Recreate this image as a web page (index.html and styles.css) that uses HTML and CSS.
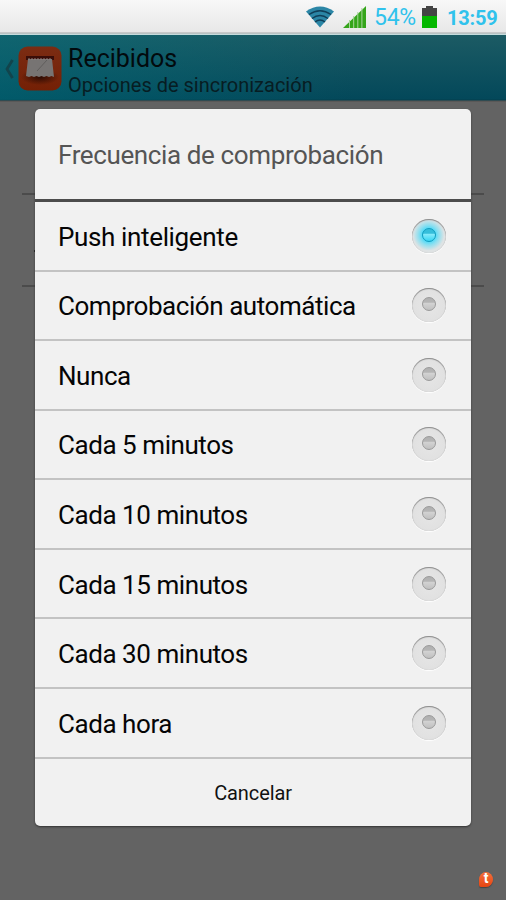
FILE: index.html
```html
<!DOCTYPE html>
<html lang="es">
<head>
<meta charset="utf-8">
<title>Recibidos</title>
<link rel="stylesheet" href="styles.css">
</head>
<body>
<div class="screen">
  <header class="status">
    <svg class="wifi" width="28" height="22" viewBox="0 0 28 22">
      <path d="M0 5.5Q14-4.500 28 5.500L14 21.500Z" fill="#2b86a6"/>
      <path d="M3 8.500Q14 1 25 8.500M6 12.500Q14 6.500 22 12.500M9 16Q14 12 19 16" fill="none" stroke="#103f59" stroke-width="1.500"/>
    </svg>
    <svg class="signal" width="23" height="22" viewBox="0 0 23 22">
      <path d="M0 22L23 0V22Z" fill="#35a51b"/>
      <path d="M6.500 14V22M10.700 10V22M14.800 6V22M18.900 2V22" stroke="#a9d59c" stroke-width="1"/>
    </svg>
    <span class="percent">54%</span>
    <svg class="battery" width="15" height="22" viewBox="0 0 15 22">
      <path d="M0 2H4V0H11V2H15V10H0Z" fill="#444"/>
      <path d="M0 10H15V22H0Z" fill="#05b800"/>
    </svg>
    <span class="clock">13:59</span>
  </header>
  <div class="appbar">
    <svg class="back" width="10" height="20" viewBox="0 0 10 20"><path d="M8.500 1L3 10L8.500 19" fill="none" stroke="#12444c" stroke-width="2.800"/></svg>
    <svg class="logo" width="44" height="45" viewBox="0 0 44 45">
      <defs>
        <linearGradient id="tile" x2="0" y2="1"><stop offset="0" stop-color="#7b2c13"/><stop offset="1" stop-color="#742005"/></linearGradient>
        <radialGradient id="shade"><stop offset="0" stop-color="#2d0c04"/><stop offset="1" stop-color="#2d0c04" stop-opacity="0"/></radialGradient>
      </defs>
      <rect x=".5" y=".5" width="43" height="44" rx="9" fill="url(#tile)"/>
      <ellipse cx="22" cy="31" rx="19" ry="8" fill="url(#shade)"/>
      <path d="M8 10H36V14H8Z" fill="#3a0d08"/>
      <path d="M10 13H34L36 31L33.500 30L31 31L28.500 30L26 31L23.500 30L21 31L18.500 30L16 31L13.500 30L11 31L8 30Z" fill="#777473"/>
      <path d="M10 13H34" stroke="#918280" stroke-width="1" stroke-dasharray="2 1"/>
      <path d="M19 25L29 14" stroke="#605e5d" stroke-width="1"/>
    </svg>
    <div class="titles">
      <h1>Recibidos</h1>
      <p>Opciones de sincronización</p>
    </div>
  </div>
  <main class="settings"><div class="setting"></div><div class="setting"><i class="mark"></i></div></main>

  <section class="dialog">
    <h2><span>Frecuencia de comprobación</span></h2>
    <ul>
      <li><span class="push">Push inteligente</span><i class="radio on"></i></li>
      <li><span>Comprobación automática</span><i class="radio"></i></li>
      <li><span>Nunca</span><i class="radio"></i></li>
      <li><span>Cada 5 minutos</span><i class="radio"></i></li>
      <li><span>Cada 10 minutos</span><i class="radio"></i></li>
      <li><span>Cada 15 minutos</span><i class="radio"></i></li>
      <li><span>Cada 30 minutos</span><i class="radio"></i></li>
      <li><span>Cada hora</span><i class="radio"></i></li>
    </ul>
    <button>Cancelar</button>
  </section>
  <div class="badge"><span>t</span></div>
</div>
</body>
</html>
```
FILE: styles.css
```css
* { box-sizing: border-box; }
body { margin: 0; font-family: Roboto, sans-serif; }
h1, h2, p, ul { margin: 0; padding: 0; font-weight: 400; }
.screen { position: relative; width: 506px; height: 900px; overflow: hidden; background: #636363; display: flex; flex-direction: column; }
.status { height: 35px; flex: none; background: linear-gradient(#f8f8f8, #e8e8e8 32px, #aaa 33px, #c6dcdd 34px); display: flex; align-items: flex-start; padding: 6px 0 0 306px; color: #30c2ec; line-height: 24px; white-space: nowrap; }
.signal { margin-left: 9px; }
.percent { font-size: 23px; letter-spacing: -0.3px; width: 42px; margin-left: 8px; }
.battery { margin-left: 6px; }
.clock { font-size: 20px; font-weight: 700; letter-spacing: -0.2px; margin-left: 10px; }
.appbar { height: 67px; flex: none; background: linear-gradient(90deg, rgba(0, 112, 125, .45), rgba(0, 112, 125, 0) 70%) 0 0 / 100% 65px no-repeat, linear-gradient(#1c5b64, #03485a 64px, #043e4c 65px, #5a5857 66px); display: flex; padding-left: 4px; }
.back { margin-top: 24px; }
.logo { margin: 11px 0 0 4px; }
.titles { margin: 10px 0 0 6px; color: #071d23; white-space: nowrap; }
h1 { font-size: 25px; line-height: 28px; color: #020a0d; }
.titles p { font-size: 20px; line-height: 24px; }
.settings { margin: 0 22px; }
.setting { height: 92px; border-bottom: 2px solid #4b4b4b; }
.setting:first-child { height: 93px; }
.mark { display: block; width: 2px; height: 2px; margin: 55px 0 0 12px; float: left; background: #222; }
.dialog { position: absolute; left: 35px; top: 109px; width: 436px; height: 717px; background: #f1f1f1; border-radius: 5px; box-shadow: 0 1px 2px #333; display: flex; flex-direction: column; overflow: hidden; }
h2 { height: 93px; flex: none; border-bottom: 3px solid #4c4c4c; padding: 2px 0 0 23px; display: flex; align-items: center; font-size: 26px; letter-spacing: -0.38px; color: #555; }
.dialog ul { list-style: none; height: 556.5px; display: grid; grid-template-rows: repeat(8, 1fr); }
.dialog li { border-bottom: 2px solid #c3c3c3; padding: 0 25px 0 23px; display: flex; justify-content: space-between; align-items: center; font-size: 26px; letter-spacing: -0.44px; color: #050505; }
.dialog li span { padding-top: 2px; }
.dialog li .push { letter-spacing: -0.36px; }
.radio { width: 34px; height: 34px; border-radius: 50%; background: radial-gradient(#e6e6e6, #e1e1e1 65%, #dcdcdc); box-shadow: inset 0 1px 1px #888, inset 0 0 1px #bbb, 0 1px 1px #fff; display: flex; align-items: center; justify-content: center; }
.radio::before { content: ""; width: 12px; height: 12px; border: 1px solid #9a9a9a; border-radius: 50%; background: linear-gradient(#b0b0b0, #b5b5b5 35%, #d2d2d2 45%, #c0c0c0); margin: -2px 1px 0 0; }
.radio.on { background: radial-gradient(circle closest-side at 49% 47%, #31d8fb 30%, #8cdff0 62%, #dfe3e4 98%); }
.radio.on::before { border: 1.5px solid #129cbd; background: linear-gradient(#35bedb 35%, #84eafb 45%, #38d5f3); }
button { flex: 1; border: 0; background: none; font: 20px Roboto, sans-serif; letter-spacing: -0.1px; color: #111; padding: 2px 0 0; }
.badge { position: absolute; left: 479px; top: 872px; width: 14px; height: 15px; border-radius: 50% 50% 50% 15%; background: linear-gradient(#f5703c, #e54512); color: #fff; font: 700 14px/13px Roboto, sans-serif; text-align: center; box-shadow: 0 1px 1px #444; }
```
